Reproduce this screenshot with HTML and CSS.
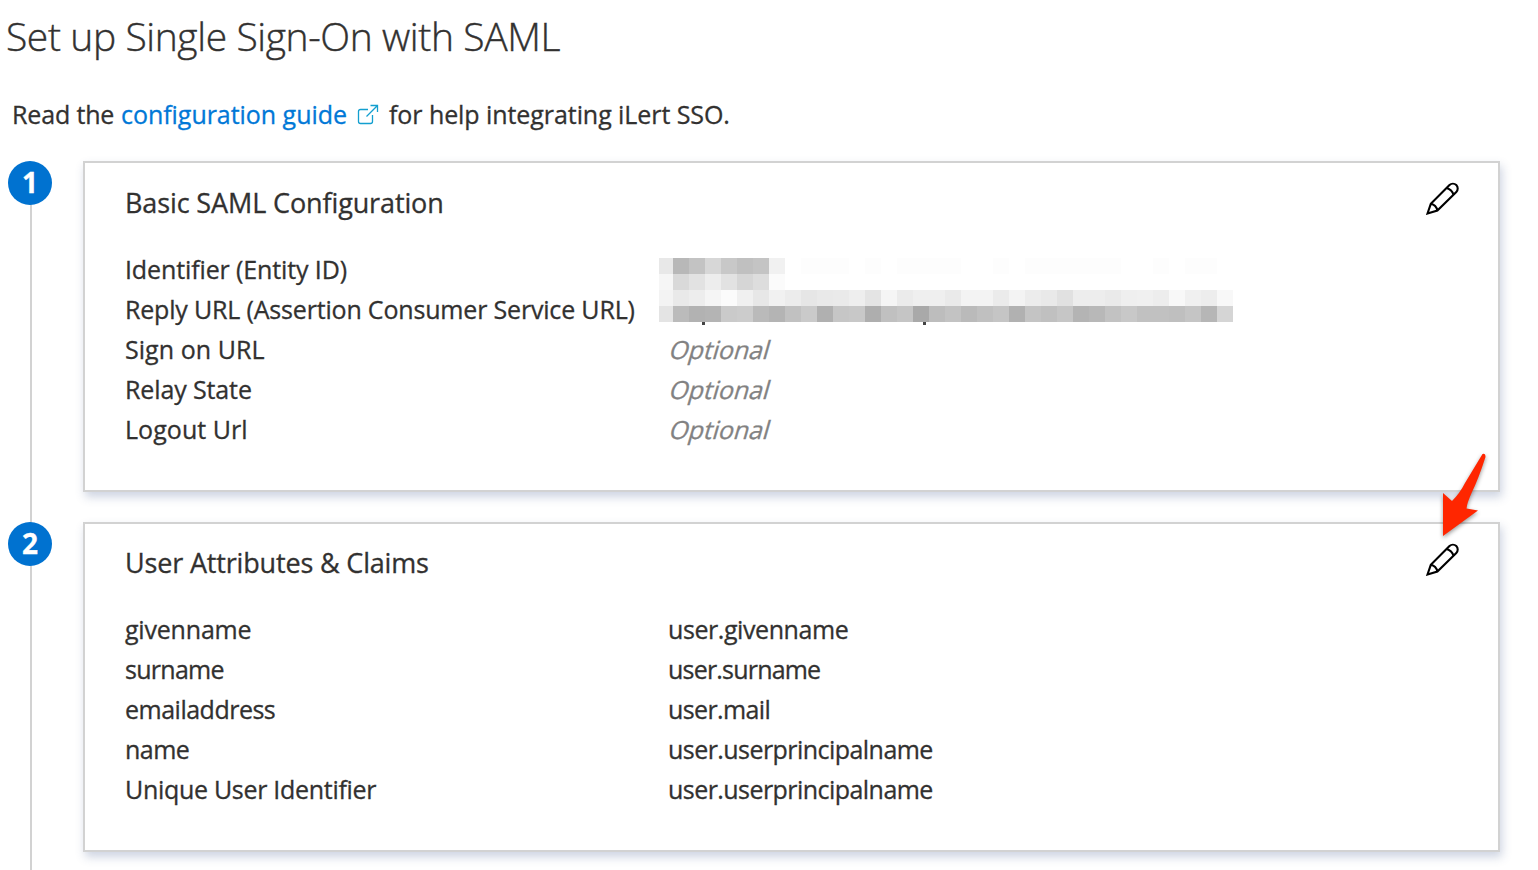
FILE: index.html
```html
<!DOCTYPE html>
<html lang="en">
<head>
<meta charset="utf-8">
<title>Set up Single Sign-On with SAML</title>
<link rel="stylesheet" href="styles.css">
</head>
<body>
<main class="page">
  <h1 class="title"><span>Set up Single Sign-On with SAML</span></h1>
  <p class="intro"><span class="i1">Read the</span><a class="guide">configuration guide</a><svg class="external" width="22" height="22" viewBox="0 0 22 22"><path d="M11 5.5H3.5Q1.500 5.500 1.500 7.500V17.500Q1.500 19.500 3.500 19.500H13.500Q15.500 19.500 15.500 17.500V11M9.500 12.500L20.500 1.500M13.500 1.500H20.500V8"/></svg><span class="i2">for help integrating iLert SSO.</span></p>
  <section class="step">
    <div class="rail"><span class="badge">1</span></div>
    <div class="card">
      <header class="head"><h2 class="h-a">Basic SAML Configuration</h2>
        <svg class="pencil" width="34" height="34" viewBox="0 0 34 34"><path d="M2.500 32.500L5.800 22.800L24.500 4.100A4.800 4.800 0 0 1 31.300 10.900L12.400 29.600ZM21.700 6.900Q27 8.500 28.500 13.700M5.800 22.800Q11.200 24 12.400 29.600"/></svg>
      </header>
      <dl class="rows">
        <dt class="a1">Identifier (Entity ID)</dt><dd></dd>
        <dt class="a2">Reply URL (Assertion Consumer Service URL)</dt><dd></dd>
        <dt class="a3">Sign on URL</dt><dd><span class="optional">Optional</span></dd>
        <dt class="a1">Relay State</dt><dd><span class="optional">Optional</span></dd>
        <dt class="a3">Logout Url</dt><dd><span class="optional">Optional</span></dd>
      </dl>
      <svg class="redacted" id="redacted" width="575" height="68" viewBox="0 0 575 68" shape-rendering="crispEdges"></svg>
    </div>
  </section>
  <section class="step second">
    <div class="rail"><span class="badge">2</span></div>
    <div class="card">
      <header class="head"><h2 class="h-b">User Attributes &amp; Claims</h2>
        <svg class="pencil" width="34" height="34" viewBox="0 0 34 34"><path d="M2.500 32.500L5.800 22.800L24.500 4.100A4.800 4.800 0 0 1 31.300 10.900L12.400 29.600ZM21.700 6.900Q27 8.500 28.500 13.700M5.800 22.800Q11.200 24 12.400 29.600"/></svg>
      </header>
      <dl class="rows">
        <dt class="b1">givenname</dt><dd class="c1">user.givenname</dd>
        <dt class="b2">surname</dt><dd class="c2">user.surname</dd>
        <dt class="b3">emailaddress</dt><dd class="c3">user.mail</dd>
        <dt class="b4">name</dt><dd class="c4">user.userprincipalname</dd>
        <dt class="b5">Unique User Identifier</dt><dd class="c4">user.userprincipalname</dd>
      </dl>
      <svg class="arrow" width="60" height="96" viewBox="0 0 60 96"><path d="M50.500 4Q53.500 3 53.500 7Q46 30 40 42Q35 53 34.500 58.500L46 60.500L11 86V43L20 51Q28 43 33 33Q42 18 50.500 4Z"/></svg>
    </div>
  </section>
</main>
<script src="redacted.js"></script>
</body>
</html>
```
FILE: styles.css
```css
* { box-sizing: border-box; }
body { margin: 0; background: #fff; color: #323130; font-family: "Open Sans", "Noto Sans", sans-serif; font-size: 25px; overflow: hidden; -webkit-text-stroke: .3px currentColor; }
.page { height: 870px; overflow: hidden; }
.title { margin: 0; padding-left: 6px; height: 85px; font-size: 39px; font-weight: 300; line-height: 72px; letter-spacing: -.4px; white-space: nowrap; -webkit-text-stroke-width: .4px; }
.intro { display: flex; align-items: center; margin: 0; padding-left: 12px; height: 60px; line-height: 60px; white-space: nowrap; }
.intro span, .intro a { margin-top: -2px; }
.i1 { width: 109px; letter-spacing: -.15px; }
.guide { width: 236px; color: #0078d7; letter-spacing: -.04px; }
.external { width: 22px; flex: none; margin-right: 10px; fill: none; stroke: #139fcf; stroke-width: 1.3; }
.i2 { letter-spacing: -.07px; }
.step { display: flex; height: 361px; }
.intro + .step { margin-top: 16px; }
.rail { width: 83px; flex: none; padding-left: 8px; background: linear-gradient(#d2d2d2, #d2d2d2) 30px 0 / 2px 100% no-repeat; }
.intro + .step .rail { background-position-y: 10px; }
.badge { display: block; width: 44px; height: 44px; border-radius: 50%; background: #0072d0; color: #fff; font-weight: 700; font-size: 28px; line-height: 43px; text-align: center; }
.card { position: relative; width: 1417px; height: 331px; border: 2px solid #d2d2d2; padding: 18px 40px; background: #fff; box-shadow: 2px 5px 9px rgba(60, 85, 140, .25); }
.second .card { height: 330px; }
.head { display: flex; justify-content: space-between; height: 68px; }
.second .head { height: 67px; }
.head h2 { margin: 0; font-size: 27px; font-weight: 400; line-height: 44px; white-space: nowrap; }
.second .head h2 { line-height: 42px; }
.head .h-a { letter-spacing: -.12px; }
.head .h-b { letter-spacing: -.17px; }
.pencil { fill: none; stroke: #000; stroke-width: 2.1; stroke-linejoin: miter; margin-right: -1px; }
.rows { display: grid; grid-template-columns: 543px 1fr; grid-auto-rows: 40px; margin: 0; line-height: 40px; white-space: nowrap; }
.rows dd { margin: 0; }
.a1 { letter-spacing: -.12px; }
.a2 { letter-spacing: -.18px; }
.a3 { letter-spacing: .05px; }
.b1 { letter-spacing: -.2px; }
.b2 { letter-spacing: -.73px; }
.b3 { letter-spacing: -.5px; }
.b4 { letter-spacing: -.5px; }
.b5 { letter-spacing: -.3px; }
.c1 { letter-spacing: -.42px; }
.c2 { letter-spacing: -.8px; }
.c3 { letter-spacing: -.63px; }
.c4 { letter-spacing: -.55px; }
.optional { display: inline-block; color: #828282; letter-spacing: -.1px; transform: skewX(-16deg); transform-origin: 0 29px; }
.redacted { position: absolute; left: 574px; top: 95px; }
.arrow { position: absolute; left: 1347px; top: -74px; fill: #ff2600; filter: drop-shadow(0 2px 2px rgba(0, 0, 0, .4)); }
```
FILE: redacted.js
```js
// Grey levels of the obscured value, one hex pair per block.
const rows = [
  "e8 b8 c3 d7 c8 c0 c4 f1 ff fd fd fd ff fd ff fd fd fd fd ff ff fd ff fd fd fd fd fd fd ff ff fd ff fd fd ff",
  "f6 d9 e2 ed e2 d6 dd fb",
  "f3 e9 ed f5 fb f0 e7 f1 ec e6 e9 ea ee e4 f5 eb ef ef ea f3 f3 eb f3 ec e9 e1 ed ed ea ef f0 ed f8 f0 ed f8",
  "e4 bb b2 b4 ca cc ba b4 c1 ca b0 c6 c8 ae c0 c5 a9 bd c3 ba c0 c5 b1 c4 c0 c6 b4 b8 c2 c8 c1 c1 bf c5 b6 d5"
];
const svg = document.getElementById("redacted");
function block(x, y, w, h, fill) {
  const r = document.createElementNS("http://www.w3.org/2000/svg", "rect");
  Object.entries({ x, y, width: w, height: h, fill }).forEach(([k, v]) => r.setAttribute(k, v));
  svg.appendChild(r);
}
rows.forEach((row, j) => row.split(" ").forEach((g, i) =>
  block(i ? i * 16 - 2 : 0, j * 16, i ? 16 : 14, 16, "#" + g + g + g)));
block(43, 64, 3, 3, "#444");
block(264, 64, 3, 3, "#444");
```
